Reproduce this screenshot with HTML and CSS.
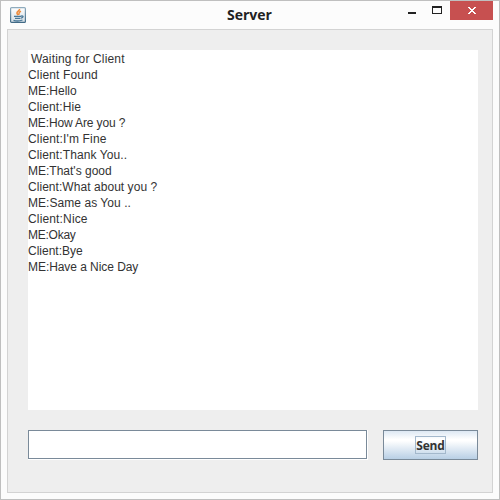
FILE: index.html
```html
<!DOCTYPE html>
<html lang="en">
<head>
<meta charset="utf-8">
<title>Server</title>
<link rel="stylesheet" href="styles.css">
</head>
<body>
<div class="window">
  <header class="titlebar">
    <svg class="app-icon" width="16" height="16" viewBox="0 0 16 16">
      <defs>
        <linearGradient id="tile" x2="0" y2="1"><stop offset="0" stop-color="#fff"/><stop offset="1" stop-color="#d3dde4"/></linearGradient>
        <linearGradient id="rim" x2="0" y2="1"><stop offset="0" stop-color="#8fabbd"/><stop offset="1" stop-color="#416a86"/></linearGradient>
      </defs>
      <rect x=".6" y=".6" width="14.800" height="14.800" rx="1" fill="url(#tile)" stroke="url(#rim)" stroke-width="1.200"/>
      <path d="M9.500 2C10 4 6.300 4.500 7 6.500L8 8.200M11 4.300C8.500 5.300 8.800 6.300 9.200 7.800" fill="none" stroke="#ee8b3b" stroke-width="1.600"/>
      <path d="M4 9.300H11M11 9.200C14 8.300 13.500 11 11 11M5 11.300H10.500M3.500 13.300C6 14.200 10 14 12.500 13" fill="none" stroke="#4a7898" stroke-width="1.300"/>
    </svg>
    <h1 class="title">Server</h1>
    <div class="controls">
      <svg class="glyphs" width="60" height="19" viewBox="0 0 60 19" shape-rendering="crispEdges">
        <path d="M18 11h8v2h-8z" fill="#222"/>
        <path d="M42 5h10v8H42zM43 7v5h8V7z" fill="#222" fill-rule="evenodd"/>
      </svg>
      <button class="close" aria-label="Close">
        <svg width="8" height="7" viewBox="0 0 8 7" shape-rendering="crispEdges"><path d="M0 0h2v1h1v1h2V1h1V0h2v1H7v1H6v1H5v1h1v1h1v1h1v1H6V6H5V5H3v1H2v1H0V6h1V5h1V4h1V3H2V2H1V1H0z" fill="#fff"/></svg>
      </button>
    </div>
  </header>
  <main class="panel">
    <div class="log">
      <p class="first loose">Waiting for Client</p>
      <p class="loose">Client Found</p>
      <p>ME:Hello</p>
      <p class="open">Client:Hie</p>
      <p class="tight">ME:How Are you ?</p>
      <p class="loose">Client:I'm Fine</p>
      <p class="open">Client:Thank You..</p>
      <p>ME:That's good</p>
      <p class="slight">Client:What about you ?</p>
      <p class="slight">ME:Same as You ..</p>
      <p class="loose">Client:Nice</p>
      <p class="tighter">ME:Okay</p>
      <p>Client:Bye</p>
      <p class="snug">ME:Have a Nice Day</p>
    </div>
    <form class="compose">
      <div class="field"><input class="message" type="text" aria-label="Message"></div>
      <button class="send" type="button"><span class="focus">Send</span></button>
    </form>
  </main>
</div>
</body>
</html>
```
FILE: styles.css
```css
* { box-sizing: border-box; }
body { margin: 0; font: 12px/16px "Liberation Sans", Arial, sans-serif; color: #333; }
.window { width: 500px; height: 500px; border: 1px solid #bfbfbf; background: #fcfcfc; padding: 0 6px 6px; display: flex; flex-direction: column; }
.titlebar { height: 28px; flex: none; display: grid; grid-template-columns: 1fr auto 1fr; }
.app-icon { margin: 6px 0 0 3px; }
.title { margin: 4px 0 0; font: bold 14px/20px "Open Sans", sans-serif; color: #222; padding-right: 1px; }
.controls { display: flex; justify-content: flex-end; }
.glyphs { flex: none; }
.close { width: 43px; height: 19px; flex: none; border: 0; padding: 0; background: #c75050; display: flex; align-items: center; justify-content: center; }
.panel { flex: 1; border: 1px solid #d3d3d3; background: #eee; padding: 20px 14px 0 20px; }
.log { width: 450px; height: 360px; background: #fff; padding-top: 1px; }
.log p { margin: 0; white-space: pre; }
.log .first { padding-left: 3px; }
.log .loose { letter-spacing: .15px; }
.log .open { letter-spacing: .1px; }
.log .slight { letter-spacing: .05px; }
.log .snug { letter-spacing: -.06px; }
.log .tight { letter-spacing: -.13px; }
.log .tighter { letter-spacing: -.25px; }
.compose { margin-top: 20px; display: flex; gap: 15px; width: 450px; }
.field { width: 340px; height: 30px; background: #fff; padding: 0 1px 1px 0; }
.message { display: block; width: 100%; height: 100%; border: 1px solid #7a8a99; border-radius: 0; background: #fff; outline: 0; }
.send { width: 95px; height: 30px; padding: 0; border: 1px solid #7a8a99; background: linear-gradient(#dde8f3 0%, #fff 30%, #fff 35%, #b8cfe5 100%); display: flex; align-items: center; justify-content: center; }
.focus { border: 1px solid #a3b8cc; width: 31px; height: 18px; font: bold 12px/17px "Open Sans", sans-serif; letter-spacing: -.2px; color: #333; }
```
